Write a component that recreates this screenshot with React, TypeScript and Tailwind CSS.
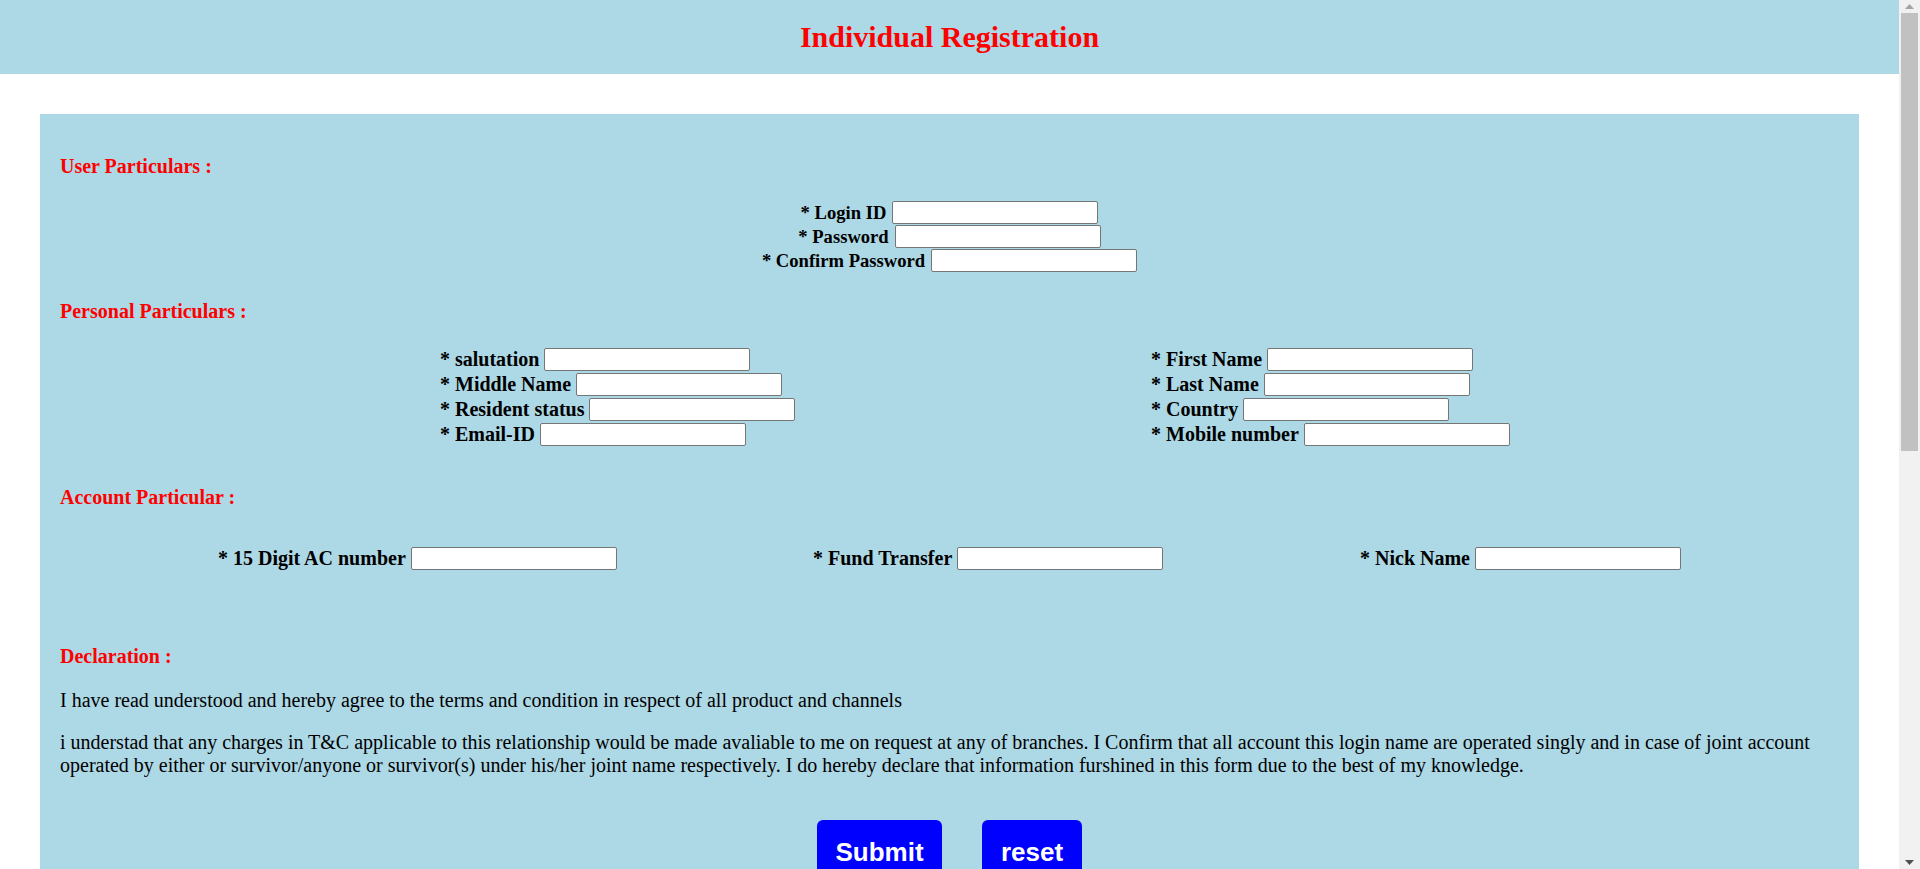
import React from 'react';

const Field: React.FC<{ label: string }> = ({ label }) => (
  <div className="flex items-center h-[25px] gap-[5px]">
    <span className="font-bold whitespace-nowrap">* {label}</span>
    <input type="text" className="w-[206px] h-[23px] bg-white border border-[#767676] rounded-[2px] px-[2px] text-[16px]" />
  </div>
);

export default function App() {
  return (
    <div className="flex h-screen overflow-hidden bg-white">
      <div className="flex-1 overflow-hidden">
        <div className="min-h-[1620px] text-black text-[20px] leading-[23px]" style={{ fontFamily: '"Liberation Serif", "Times New Roman", serif' }}>
          {/* Header */}
          <div className="h-[74px] bg-[#add8e6] flex items-center justify-center">
            <h1 className="text-[30px] leading-[34px] font-bold text-[#ff0000]">Individual Registration</h1>
          </div>

          {/* Form box */}
          <div className="mt-[40px] mx-[40px] bg-[#add8e6] px-[20px] pt-[41px] pb-[500px]">
            <h3 className="font-bold text-[#ff0000]">User Particulars :</h3>

            <div className="mt-[22px] flex flex-col items-center text-[18.6px]">
              {['Login ID', 'Password', 'Confirm Password'].map((l) => (
                <div key={l} className="flex items-center h-[24px] gap-[6px]">
                  <span className="font-bold whitespace-nowrap">* {l}</span>
                  <input type="text" className="w-[206px] h-[23px] bg-white border border-[#767676] rounded-[2px]" />
                </div>
              ))}
            </div>

            <h3 className="mt-[28px] font-bold text-[#ff0000]">Personal Particulars :</h3>

            <div className="mt-[24px] pl-[380px] grid grid-cols-[711px_auto]">
              <div>
                <Field label="salutation" />
                <Field label="Middle Name" />
                <Field label="Resident status" />
                <Field label="Email-ID" />
              </div>
              <div>
                <Field label="First Name" />
                <Field label="Last Name" />
                <Field label="Country" />
                <Field label="Mobile number" />
              </div>
            </div>

            <h3 className="mt-[39px] font-bold text-[#ff0000]">Account Particular :</h3>

            <div className="mt-[37px] pl-[158px] grid grid-cols-[595px_547px_auto]">
              <Field label="15 Digit AC number" />
              <Field label="Fund Transfer" />
              <Field label="Nick Name" />
            </div>

            <h3 className="mt-[74px] font-bold text-[#ff0000]">Declaration :</h3>

            <p className="mt-[21px]">
              I have read understood and hereby agree to the terms and condition in respect of all product and channels
            </p>
            <p className="mt-[19px]">
              i understad that any charges in T&amp;C applicable to this relationship would be made avaliable to me on request at any of branches. I Confirm that all account this login name are operated singly and in case of joint account operated by either or survivor/anyone or survivor(s) under his/her joint name respectively. I do hereby declare that information furshined in this form due to the best of my knowledge.
            </p>

            <div className="mt-[43px] flex justify-center gap-[40px]" style={{ fontFamily: '"Liberation Sans", Arial, sans-serif' }}>
              <button type="button" className="w-[125px] h-[64px] bg-[#0000ff] text-white font-bold text-[26px] rounded-[6px]">Submit</button>
              <button type="button" className="w-[100px] h-[64px] bg-[#0000ff] text-white font-bold text-[26px] rounded-[6px]">reset</button>
            </div>
          </div>
        </div>
      </div>

      {/* Browser scrollbar */}
      <div className="w-[21px] shrink-0 bg-[#f1f1f1] flex flex-col items-center">
        <div className="h-[13px] flex items-center justify-center">
          <svg width="9" height="5" viewBox="0 0 9 5"><path d="M4.5 0 L9 5 L0 5 Z" fill="#a3a3a3" /></svg>
        </div>
        <div className="w-[17px] h-[438px] bg-[#c1c1c1]" />
        <div className="flex-1" />
        <div className="h-[14px] flex items-center justify-center">
          <svg width="9" height="5" viewBox="0 0 9 5"><path d="M0 0 L9 0 L4.5 5 Z" fill="#505050" /></svg>
        </div>
      </div>
    </div>
  );
}
